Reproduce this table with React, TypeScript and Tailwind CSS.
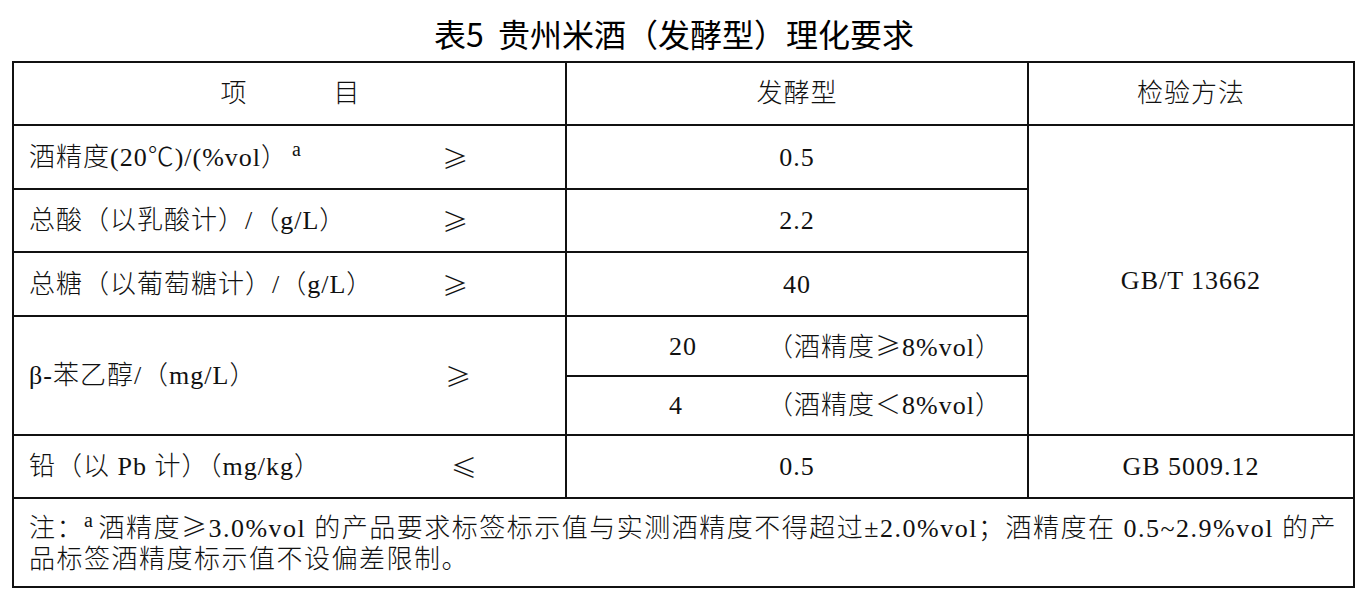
const cell = "border-2 border-[#111] align-middle p-0";

const Ge = ({ c = "≥" }: { c?: string }) => (
  <span className="font-['Noto_Sans_CJK_SC',sans-serif] font-light">{c}</span>
);

const Label = ({
  text,
  sup,
  sign,
  width = "w-[413px]",
}: {
  text: string;
  sup?: string;
  sign: string;
  width?: string;
}) => (
  <div className="flex items-center pl-[15px]">
    <span className={`${width} whitespace-nowrap`}>
      {text}
      {sup && <sup className="ml-[4px] text-[20px]">{sup}</sup>}
    </span>
    <Ge c={sign} />
  </div>
);

const SubValue = ({ value, children }: { value: string; children: React.ReactNode }) => (
  <div className="flex items-center pl-[102px] whitespace-nowrap">
    <span className="w-[98px]">{value}</span>
    <span>{children}</span>
  </div>
);

export default function App() {
  return (
    <div className="bg-white w-[1372px] h-[610px] text-[#111] font-['Liberation_Serif','Noto_Sans_CJK_SC',serif]">
      {/* 表头标题 */}
      <div className="flex h-[61px] items-center justify-center pt-[4px] pr-[24px]">
        <h1 className="font-['Noto_Sans_CJK_SC',sans-serif] text-[32px] font-normal leading-none text-black">
          表5&nbsp;&nbsp;贵州米酒（发酵型）理化要求
        </h1>
      </div>

      <table className="ml-[12px] w-[1341px] table-fixed border-collapse text-[26px] tracking-[1px] font-light">
        <colgroup>
          <col className="w-[553px]" />
          <col className="w-[462px]" />
          <col className="w-[326px]" />
        </colgroup>
        <tbody>
          <tr className="h-[63px]">
            <td className={cell}>
              <div className="flex justify-center gap-[86px] pl-[2px]">
                <span>项</span>
                <span>目</span>
              </div>
            </td>
            <td className={`${cell} text-center`}>发酵型</td>
            <td className={`${cell} text-center`}>检验方法</td>
          </tr>

          <tr className="h-[64px]">
            <td className={cell}>
              <Label text="酒精度(20℃)/(%vol）" sup="a" sign="≥" />
            </td>
            <td className={`${cell} text-center`}>0.5</td>
            <td className={`${cell} text-center`} rowSpan={5}>
              GB/T 13662
            </td>
          </tr>

          <tr className="h-[63px]">
            <td className={cell}>
              <Label text="总酸（以乳酸计）/（g/L）" sign="≥" />
            </td>
            <td className={`${cell} text-center`}>2.2</td>
          </tr>

          <tr className="h-[64px]">
            <td className={cell}>
              <Label text="总糖（以葡萄糖计）/（g/L）" sign="≥" />
            </td>
            <td className={`${cell} text-center`}>40</td>
          </tr>

          <tr className="h-[60px]">
            <td className={cell} rowSpan={2}>
              <Label text="β-苯乙醇/（mg/L）" sign="≥" width="w-[416px]" />
            </td>
            <td className={cell}>
              <SubValue value="20">
                （酒精度<Ge />8%vol）
              </SubValue>
            </td>
          </tr>
          <tr className="h-[59px]">
            <td className={cell}>
              <SubValue value="4">（酒精度＜8%vol）</SubValue>
            </td>
          </tr>

          <tr className="h-[63px]">
            <td className={cell}>
              <Label text="铅（以 Pb 计）（mg/kg）" sign="≤" width="w-[422px]" />
            </td>
            <td className={`${cell} text-center`}>0.5</td>
            <td className={`${cell} text-center`}>GB 5009.12</td>
          </tr>

          <tr className="h-[89px]">
            <td className={`${cell} align-top`} colSpan={3}>
              <p className="whitespace-nowrap pl-[15px] pt-[11px] leading-[31px] tracking-[1.5px]">
                注：<sup className="mr-[4px] text-[20px]">a</sup>
                酒精度<Ge />3.0%vol 的产品要求标签标示值与实测酒精度不得超过±2.0%vol；酒精度在 0.5~2.9%vol 的产
                <br />
                品标签酒精度标示值不设偏差限制。
              </p>
            </td>
          </tr>
        </tbody>
      </table>
    </div>
  );
}
